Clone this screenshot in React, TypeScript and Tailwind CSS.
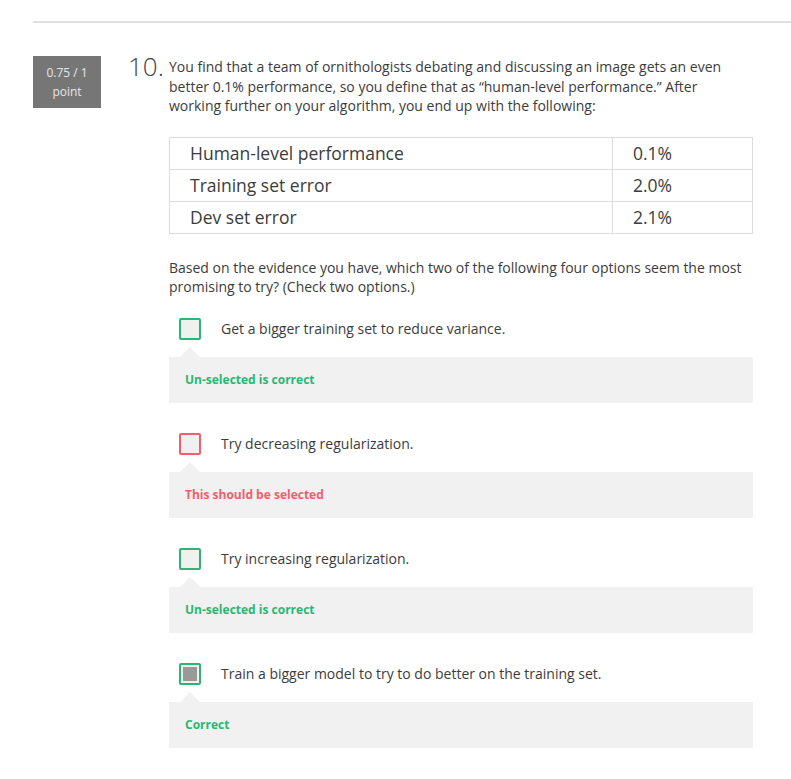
import React from "react";

type Option = {
  label: string;
  checked: boolean;
  status: "ok" | "bad";
  feedback: string;
};

const options: Option[] = [
  { label: "Get a bigger training set to reduce variance.", checked: false, status: "ok", feedback: "Un-selected is correct" },
  { label: "Try decreasing regularization.", checked: false, status: "bad", feedback: "This should be selected" },
  { label: "Try increasing regularization.", checked: false, status: "ok", feedback: "Un-selected is correct" },
  { label: "Train a bigger model to try to do better on the training set.", checked: true, status: "ok", feedback: "Correct" },
];

const rows = [
  ["Human-level performance", "0.1%"],
  ["Training set error", "2.0%"],
  ["Dev set error", "2.1%"],
];

function OptionRow({ opt }: { opt: Option }) {
  const ok = opt.status === "ok";
  return (
    <div>
      <div className="flex items-center pl-[10px]">
        <div
          className={
            "w-[22px] h-[22px] rounded-[2px] border-2 bg-[#f0f0f0] p-[2px] " +
            (ok ? "border-[#2bb673]" : "border-[#f55c6d]")
          }
        >
          {opt.checked && <div className="w-full h-full bg-[#999999]" />}
        </div>
        <span className="ml-[20px] text-[14px] text-[#3c3c3c]">{opt.label}</span>
      </div>
      <div className="relative mt-[17px] h-[46px] bg-[#f1f1f1] flex items-center pl-[16px]">
        {/* little pointer up to the checkbox */}
        <div className="absolute -top-[10px] left-[11px] w-0 h-0 border-l-[10px] border-r-[10px] border-b-[10px] border-l-transparent border-r-transparent border-b-[#f1f1f1]" />
        <span className={"text-[12px] font-bold " + (ok ? "text-[#2bb673]" : "text-[#f55c6d]")}>
          {opt.feedback}
        </span>
      </div>
    </div>
  );
}

export default function App() {
  return (
    <div className="bg-white min-h-[779px] pl-[33px] pt-[21px]" style={{ fontFamily: '"Open Sans", sans-serif' }}>
      <div className="h-[2px] bg-[#e1e1e1]" />

      <div className="flex items-start mt-[34px]">
        <div className="w-[68px] h-[52px] bg-[#767676] text-[#e6e6e6] text-[12px] leading-[19px] flex flex-col items-center justify-center -mt-[1px]">
          <span>0.75 / 1</span>
          <span>point</span>
        </div>

        <div className="ml-[27px] text-[26px] font-light leading-[22px] text-[#444] w-[41px] -mt-[2px]">10.</div>

        <div className="w-[584px]">
          <p className="text-[14px] leading-[19.5px] text-[#3c3c3c]">
            You find that a team of ornithologists debating and discussing an image gets an even better 0.1% performance, so you define that as “human-level performance.” After working further on your algorithm, you end up with the following:
          </p>

          <table className="mt-[21px] w-[584px] border-collapse text-[17.5px] text-[#3c3c3c]">
            <tbody>
              {rows.map(([a, b]) => (
                <tr key={a} className="h-[32px]">
                  <td className="border border-[#dddddd] pl-[20px] w-[443px]">{a}</td>
                  <td className="border border-[#dddddd] pl-[20px]">{b}</td>
                </tr>
              ))}
            </tbody>
          </table>

          <p className="mt-[24px] text-[14px] leading-[19.5px] text-[#3c3c3c]">
            Based on the evidence you have, which two of the following four options seem the most promising to try? (Check two options.)
          </p>

          <div className="mt-[21px]">
            {options.map((o, i) => (
              <div key={i} className={i === 0 ? "" : "mt-[30px]"}>
                <OptionRow opt={o} />
              </div>
            ))}
          </div>
        </div>
      </div>
    </div>
  );
}
